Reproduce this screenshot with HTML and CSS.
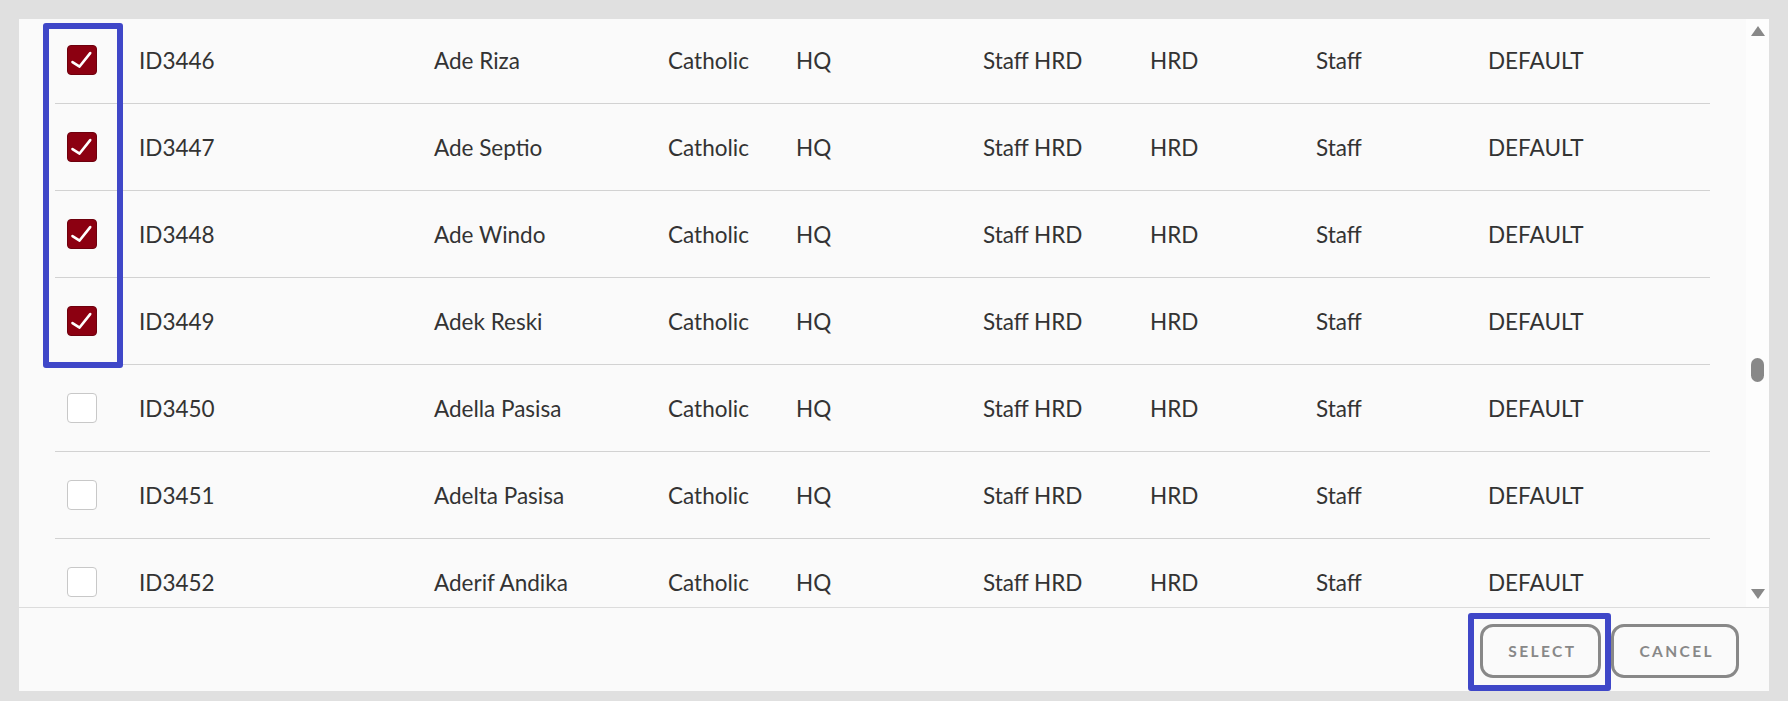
FILE: index.html
```html
<!DOCTYPE html>
<html lang="en">
<head>
    <meta charset="UTF-8">
    <meta name="viewport" content="width=device-width, initial-scale=1.0">
    <title>Select Employees</title>
    <link rel="stylesheet" href="styles.css">
</head>
<body>
    <div class="dialog">
        <div class="scroll-area">
            <div class="rows">
                <div class="row">
                    <span class="check checked"><svg viewBox="0 0 30 30"><path d="M4.8 17.2 L12.4 22 L23.8 7.6"/></svg></span>
                    <span>ID3446</span><span>Ade Riza</span><span>Catholic</span><span>HQ</span><span>Staff HRD</span><span>HRD</span><span>Staff</span><span>DEFAULT</span>
                </div>
                <div class="row">
                    <span class="check checked"><svg viewBox="0 0 30 30"><path d="M4.8 17.2 L12.4 22 L23.8 7.6"/></svg></span>
                    <span>ID3447</span><span>Ade Septio</span><span>Catholic</span><span>HQ</span><span>Staff HRD</span><span>HRD</span><span>Staff</span><span>DEFAULT</span>
                </div>
                <div class="row">
                    <span class="check checked"><svg viewBox="0 0 30 30"><path d="M4.8 17.2 L12.4 22 L23.8 7.6"/></svg></span>
                    <span>ID3448</span><span>Ade Windo</span><span>Catholic</span><span>HQ</span><span>Staff HRD</span><span>HRD</span><span>Staff</span><span>DEFAULT</span>
                </div>
                <div class="row">
                    <span class="check checked"><svg viewBox="0 0 30 30"><path d="M4.8 17.2 L12.4 22 L23.8 7.6"/></svg></span>
                    <span>ID3449</span><span>Adek Reski</span><span>Catholic</span><span>HQ</span><span>Staff HRD</span><span>HRD</span><span>Staff</span><span>DEFAULT</span>
                </div>
                <div class="row">
                    <span class="check"></span>
                    <span>ID3450</span><span>Adella Pasisa</span><span>Catholic</span><span>HQ</span><span>Staff HRD</span><span>HRD</span><span>Staff</span><span>DEFAULT</span>
                </div>
                <div class="row">
                    <span class="check"></span>
                    <span>ID3451</span><span>Adelta Pasisa</span><span>Catholic</span><span>HQ</span><span>Staff HRD</span><span>HRD</span><span>Staff</span><span>DEFAULT</span>
                </div>
                <div class="row">
                    <span class="check"></span>
                    <span>ID3452</span><span>Aderif Andika</span><span>Catholic</span><span>HQ</span><span>Staff HRD</span><span>HRD</span><span>Staff</span><span>DEFAULT</span>
                </div>
            </div>
            <div class="scrollbar">
                <span class="arrow up"></span>
                <div class="track"><span class="thumb"></span></div>
                <span class="arrow down"></span>
            </div>
            <div class="mark mark-checks"></div>
        </div>
        <div class="footer">
            <button class="btn btn-select">Select<span class="mark mark-select"></span></button>
            <button class="btn">Cancel</button>
        </div>
    </div>
</body>
</html>
```

FILE: styles.css
```css
html, body {
    margin: 0;
    height: 100%;
}
body {
    background: #e0e0e0;
    font-family: 'Lato', 'Noto Sans', sans-serif;
    color: #333;
    padding: 19px 19px 10px 19px;
    box-sizing: border-box;
}
.dialog {
    width: 1750px;
    height: 672px;
    background: #fafafa;
    display: flex;
    flex-direction: column;
}
.scroll-area {
    position: relative;
    height: 588px;
    display: flex;
    overflow: hidden;
    border-bottom: 1px solid #dcdcdc;
}
.rows {
    flex: 1;
    margin: -2px 36px 0 36px;
}
.row {
    height: 86px;
    border-bottom: 1px solid #d2d2d2;
    display: grid;
    grid-template-columns: 84px 295px 234px 128px 187px 167px 166px 172px 1fr;
    align-items: center;
    font-size: 22.5px;
}
.check {
    width: 28px;
    height: 28px;
    margin: 0 0 0 12px;
    border: 1px solid #c8c8c8;
    border-radius: 4px;
    background: #fff;
    display: flex;
}
.check.checked {
    background: #8c0011;
    border-color: #6e000d;
}
.check svg {
    width: 100%;
    height: 100%;
}
.check path {
    fill: none;
    stroke: #fff;
    stroke-width: 2.8;
    stroke-linecap: round;
    stroke-linejoin: round;
}
.scrollbar {
    width: 23px;
    background: #fdfdfd;
    display: flex;
    flex-direction: column;
    align-items: center;
    padding: 7px 0 8px;
}
.arrow {
    width: 0;
    height: 0;
    border-left: 7px solid transparent;
    border-right: 7px solid transparent;
}
.arrow.up { border-bottom: 10px solid #888; }
.arrow.down { border-top: 10px solid #888; }
.track {
    flex: 1;
}
.thumb {
    display: block;
    width: 13px;
    height: 24px;
    margin-top: 322px;
    border-radius: 7px;
    background: #888;
}
.footer {
    flex: 1;
    display: flex;
    justify-content: flex-end;
    align-items: flex-start;
    gap: 10px;
    padding: 16px 30px 0 0;
}
.btn {
    position: relative;
    height: 54px;
    padding: 0 22px 0 25px;
    border: 3px solid #888;
    border-radius: 13px;
    background: transparent;
    color: #888;
    font-family: 'Lato', sans-serif;
    font-weight: 700;
    font-size: 15.5px;
    letter-spacing: 2.4px;
    text-transform: uppercase;
}
.mark {
    position: absolute;
    border: 6px solid #3f47c8;
    border-radius: 3px;
    pointer-events: none;
}
.mark-checks {
    top: 4px;
    left: 24px;
    width: 68px;
    height: 333px;
}
.mark-select {
    top: -14px;
    left: -15px;
    width: 131px;
    height: 66px;
}
```
